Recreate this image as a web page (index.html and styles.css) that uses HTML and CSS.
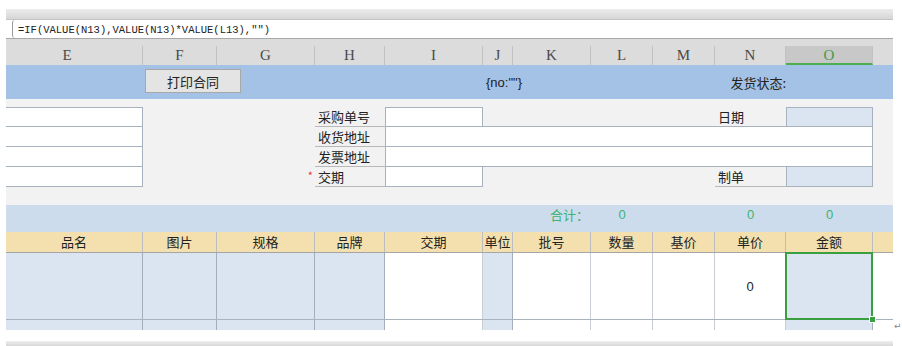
FILE: index.html
```html
<!DOCTYPE html>
<html lang="zh-CN">
<head>
    <meta charset="UTF-8">
    <title>采购合同</title>
    <link rel="stylesheet" href="styles.css">
</head>
<body>
    <div class="sheet">
        <div class="top-band"></div>
        <div class="formula-row">
            <div class="formula-box">=IF(VALUE(N13),VALUE(N13)*VALUE(L13),"")</div>
        </div>

        <div class="col-head cols">
            <div class="ch first">E</div>
            <div class="ch">F</div>
            <div class="ch">G</div>
            <div class="ch">H</div>
            <div class="ch">I</div>
            <div class="ch">J</div>
            <div class="ch">K</div>
            <div class="ch">L</div>
            <div class="ch">M</div>
            <div class="ch">N</div>
            <div class="ch active">O</div>
            <div class="ch last"></div>
        </div>

        <div class="toolbar cols">
            <button class="print-btn">打印合同</button>
            <div class="order-no">{no:""}</div>
            <div class="ship-status">发货状态:</div>
        </div>

        <div class="form cols">
            <div class="box r1 c-e"></div>
            <div class="label r1">采购单号</div>
            <div class="box r1 c-i"></div>
            <div class="label r1 c-n">日期</div>
            <div class="box blue r1 c-o"></div>

            <div class="box r2 c-e"></div>
            <div class="label r2">收货地址</div>
            <div class="box r2 wide"></div>

            <div class="box r3 c-e"></div>
            <div class="label r3">发票地址</div>
            <div class="box r3 wide"></div>

            <div class="box r4 c-e"></div>
            <div class="req r4">*</div>
            <div class="label r4">交期</div>
            <div class="box r4 c-i"></div>
            <div class="label r4 c-n">制单</div>
            <div class="box blue r4 c-o"></div>
        </div>

        <div class="totals cols">
            <div class="sum-label">合计：</div>
            <div class="sum c-l">0</div>
            <div class="sum c-n">0</div>
            <div class="sum c-o">0</div>
        </div>

        <div class="thead cols">
            <div class="th">品名</div>
            <div class="th">图片</div>
            <div class="th">规格</div>
            <div class="th">品牌</div>
            <div class="th">交期</div>
            <div class="th">单位</div>
            <div class="th">批号</div>
            <div class="th">数量</div>
            <div class="th">基价</div>
            <div class="th">单价</div>
            <div class="th">金额</div>
            <div class="th end"></div>
        </div>

        <div class="tbody cols">
            <div class="td blue"></div>
            <div class="td blue"></div>
            <div class="td blue"></div>
            <div class="td blue"></div>
            <div class="td"></div>
            <div class="td blue"></div>
            <div class="td"></div>
            <div class="td"></div>
            <div class="td"></div>
            <div class="td num">0</div>
            <div class="td blue selected"><span class="handle"></span></div>
            <div class="td end"></div>
        </div>

        <div class="stub-line">
            <div class="tbody stub cols">
                <div class="td blue"></div>
                <div class="td blue"></div>
                <div class="td blue"></div>
                <div class="td blue"></div>
                <div class="td"></div>
                <div class="td blue"></div>
                <div class="td"></div>
                <div class="td"></div>
                <div class="td"></div>
                <div class="td"></div>
                <div class="td blue"></div>
                <div class="td end"></div>
            </div>
            <span class="return-mark">↵</span>
        </div>

        <div class="bottom-band"></div>
    </div>
</body>
</html>
```

FILE: styles.css
```css
body {
    margin: 0;
    background-color: #fff;
    font-family: "Noto Sans CJK SC", "Noto Sans", sans-serif;
    font-size: 13px;
    color: #222;
}
.sheet {
    width: 887px;
    margin-left: 6px;
    padding-top: 9px;
}
.cols {
    display: grid;
    grid-template-columns: 137px 74px 98px 70px 98px 30px 78px 62px 62px 71px 87px 20px;
}
.top-band {
    height: 11px;
    box-sizing: border-box;
    background: linear-gradient(#ececec, #d6d6d6);
    border-bottom: 1px solid #c4c4c4;
}
.formula-row {
    height: 18px;
    padding-left: 6px;
    background-color: #fff;
}
.formula-box {
    height: 18px;
    box-sizing: border-box;
    border-left: 1px solid #9a9a9a;
    border-radius: 3px 0 0 3px;
    padding-left: 5px;
    padding-top: 2px;
    font-family: "Liberation Mono", monospace;
    font-size: 10.5px;
    line-height: 16px;
    color: #222;
}
.col-head {
    height: 27px;
    box-sizing: border-box;
    border-top: 1px solid #a9a9a9;
    padding-top: 7px;
    background-color: #dcdcdc;
}
.ch {
    height: 19px;
    box-sizing: border-box;
    border-right: 1px solid #c2c2c2;
    text-align: center;
    font-family: "Liberation Serif", serif;
    font-size: 15px;
    line-height: 19px;
    color: #4a4a4a;
}
.ch.first {
    padding-right: 14px;
}
.ch.active {
    background-color: #c8c8c8;
    border-bottom: 2px solid #4caf50;
    color: #3f9a4a;
}
.ch.last {
    border-right: none;
}
.toolbar {
    height: 34px;
    align-items: center;
    background-color: #a4c2e5;
}
.print-btn {
    grid-column: 2 / span 2;
    justify-self: start;
    margin-left: 2px;
    width: 96px;
    height: 24px;
    margin-top: -2px;
    background-color: #e4e4e4;
    border: 1px solid #a8a8a8;
    font-family: "Noto Sans CJK SC", sans-serif;
    font-size: 13px;
    color: #222;
    padding: 0;
}
.order-no {
    grid-column: 6 / span 2;
    padding-left: 3px;
    font-family: "Liberation Sans", sans-serif;
    font-size: 13px;
}
.ship-status {
    grid-column: 10;
    justify-self: end;
    white-space: nowrap;
}
.form {
    grid-template-rows: repeat(4, 20px);
    padding: 8px 0 18px;
    background-color: #f2f2f2;
}
.r1 { grid-row: 1; }
.r2 { grid-row: 2; }
.r3 { grid-row: 3; }
.r4 { grid-row: 4; }
.c-e { grid-column: 1; }
.c-i { grid-column: 5; }
.c-l { grid-column: 8; }
.c-n { grid-column: 10; }
.c-o { grid-column: 11; }
.box {
    background-color: #fff;
    border: 1px solid #a8b2bf;
    border-left: none;
}
.box.c-i {
    border-left: 1px solid #a8b2bf;
}
.box.wide {
    grid-column: 5 / 12;
    border-left: 1px solid #a8b2bf;
}
.box.blue {
    background-color: #dbe5f1;
    border-left: 1px solid #a8b2bf;
}
.r2.box, .r3.box, .r4.box {
    margin-top: -1px;
}
.label {
    grid-column: 4;
    border-bottom: 1px solid #b8b8b8;
    padding-left: 3px;
    line-height: 19px;
    white-space: nowrap;
}
.label.c-n {
    grid-column: 10;
}
.req {
    grid-column: 3;
    text-align: right;
    padding-right: 2px;
    color: #e03c3c;
    font-size: 11px;
    line-height: 17px;
}
.totals {
    height: 27px;
    align-items: start;
    line-height: 20px;
    background-color: #ccdcec;
    color: #3cb371;
}
.sum-label {
    grid-column: 7;
    text-align: right;
    padding-right: 2px;
}
.sum {
    text-align: center;
    font-family: "Liberation Sans", sans-serif;
}
.thead {
    height: 21px;
    box-sizing: border-box;
    border-bottom: 1px solid #a5a5a5;
    background-color: #f4e0ae;
}
.th {
    border-right: 1px solid #bdbdbd;
    text-align: center;
    line-height: 20px;
}
.th.end {
    border-right: none;
}
.tbody {
    height: 67px;
    box-sizing: border-box;
    border-bottom: 1px solid #aab3bd;
}
.td {
    position: relative;
    border-right: 1px solid #c9ced4;
    background-color: #fff;
}
.td.blue {
    background-color: #dbe5f1;
    border-right-color: #a3afbd;
}
.td.end {
    border-right: none;
}
.td.num {
    display: flex;
    align-items: center;
    justify-content: center;
    font-family: "Liberation Sans", sans-serif;
    font-size: 13px;
}
.td.selected::after {
    content: '';
    position: absolute;
    top: -1px;
    left: -1px;
    right: -1px;
    bottom: -1px;
    border: 2px solid #3a9f3f;
}
.handle {
    position: absolute;
    right: -4px;
    bottom: -4px;
    width: 5px;
    height: 5px;
    background-color: #3a9f3f;
    border: 1px solid #fff;
    z-index: 1;
}
.stub-line {
    display: flex;
    align-items: flex-start;
    margin-bottom: 10px;
}
.tbody.stub {
    height: 10px;
    border-bottom: none;
    flex-shrink: 0;
}
.return-mark {
    margin-left: 1px;
    margin-top: 2px;
    font-family: "DejaVu Sans", sans-serif;
    font-size: 9px;
    line-height: 9px;
    color: #888;
}
.bottom-band {
    height: 6px;
    background: linear-gradient(#efefef, #d2d2d2);
}
```
